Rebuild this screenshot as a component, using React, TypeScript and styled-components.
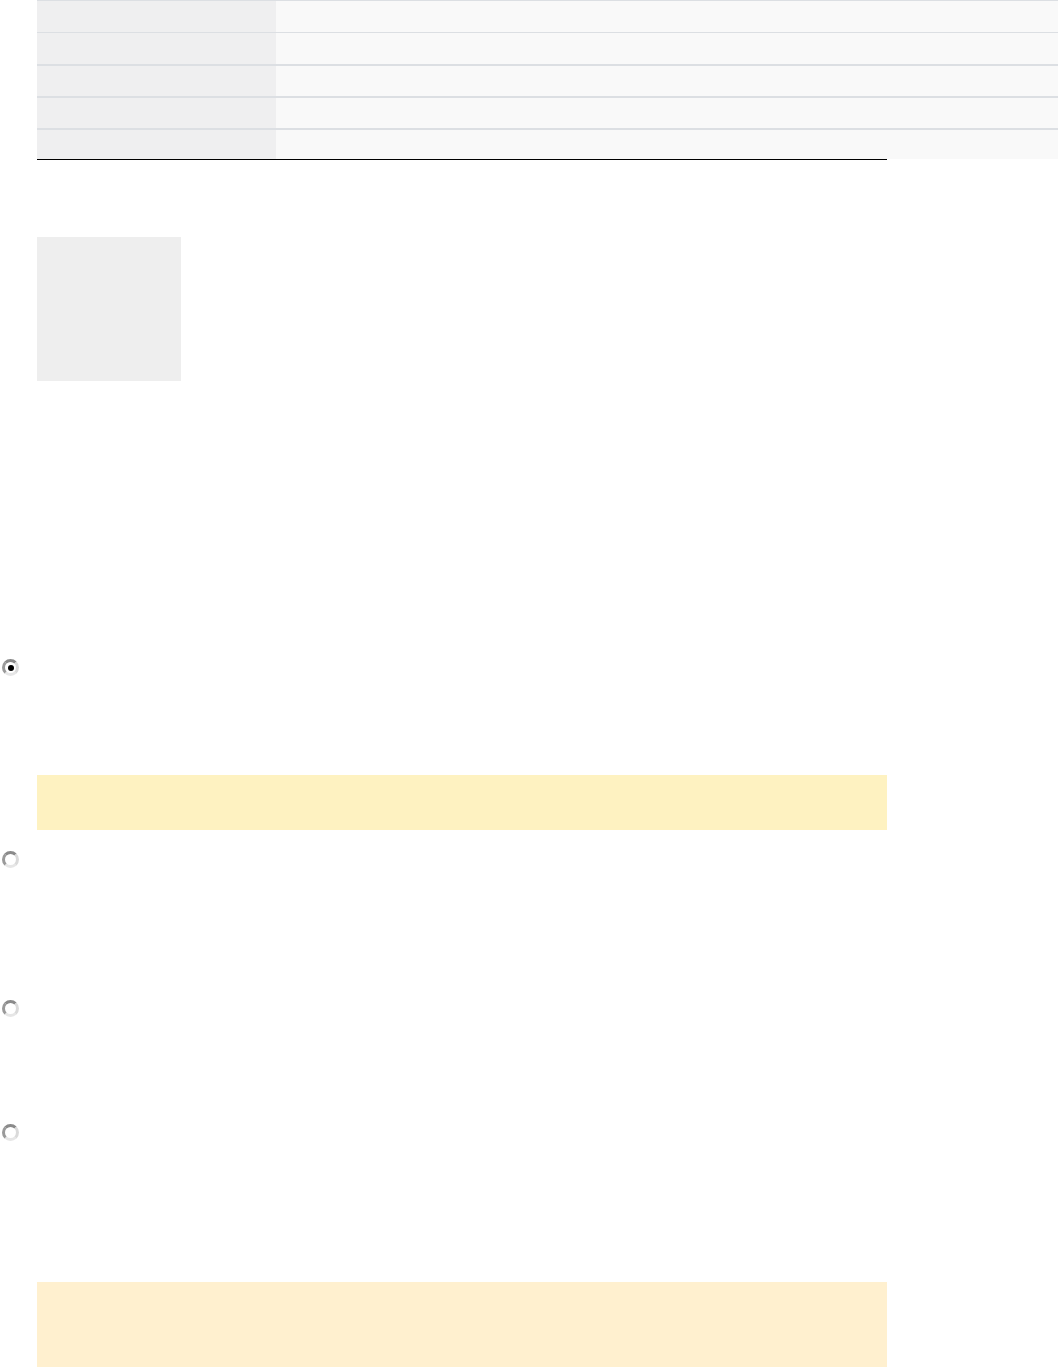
import styled, { createGlobalStyle } from "styled-components";

const GlobalStyle = createGlobalStyle`
    *, *::before, *::after {
        box-sizing: border-box;
    }
    html, body {
        margin: 0;
        padding: 0;
        background: #ffffff;
        overflow: hidden;
    }
    body {
        font-family: "Liberation Sans", Arial, sans-serif;
        font-size: 14px;
        color: #222;
    }
`;

const Page = styled.div`
    width: 1058px;
    height: 1367px;
    overflow: hidden;
`;

const Section = styled.div`
    width: 850px;
    margin-left: 37px;
    border-bottom: 1px solid #000000;
`;

const SpecTable = styled.div`
    width: 1021px;
    display: flex;
    flex-direction: column;
`;

const SpecRow = styled.div<{ $thick?: boolean; $h: number }>`
    display: grid;
    grid-template-columns: 239px 1fr;
    height: ${(p) => p.$h}px;
    border-top: ${(p) => (p.$thick ? 2 : 1)}px solid #dcdfe3;
`;

const KeyCell = styled.div`
    background: #efeff0;
`;

const ValueCell = styled.div`
    background: #f9f9f9;
`;

const Thumb = styled.div`
    width: 144px;
    height: 144px;
    margin: 77px 0 0 37px;
    background: #eeeeee;
`;

const Options = styled.div`
    display: flex;
    flex-direction: column;
`;

const Option = styled.div<{ $top: number }>`
    display: grid;
    grid-template-columns: 37px 850px;
    margin-top: ${(p) => p.$top}px;
`;

const Radio = styled.span<{ $checked?: boolean }>`
    display: block;
    width: 17px;
    height: 17px;
    margin-left: 2px;
    border-radius: 50%;
    border: 3px solid;
    border-color: #8a8a8a #dadada #e6e6e6 #9a9a9a;
    position: relative;
    &::after {
        content: "";
        display: ${(p) => (p.$checked ? "block" : "none")};
        position: absolute;
        left: 2.5px;
        top: 2.5px;
        width: 6px;
        height: 6px;
        border-radius: 50%;
        background: #000;
    }
`;

const OptionBody = styled.div<{ $h: number }>`
    min-height: ${(p) => p.$h}px;
`;

const Note = styled.div<{ $bg: string; $h: number; $top: number }>`
    width: 850px;
    height: ${(p) => p.$h}px;
    margin: ${(p) => p.$top}px 0 0 37px;
    background: ${(p) => p.$bg};
`;

const rows = [
    { h: 32, thick: false },
    { h: 32, thick: false },
    { h: 32, thick: true },
    { h: 32, thick: true },
    { h: 31, thick: true },
];

export default function App() {
    return (
        <Page>
            <GlobalStyle />
            <Section>
                <SpecTable>
                    {rows.map((r, i) => (
                        <SpecRow key={i} $h={r.h} $thick={r.thick}>
                            <KeyCell />
                            <ValueCell />
                        </SpecRow>
                    ))}
                </SpecTable>
            </Section>
            <Thumb />
            <Options>
                <Option $top={278}>
                    <Radio $checked />
                    <OptionBody $h={17} />
                </Option>
                <Note $bg="#fef2c1" $h={55} $top={99} />
                <Option $top={21}>
                    <Radio />
                    <OptionBody $h={17} />
                </Option>
                <Option $top={132}>
                    <Radio />
                    <OptionBody $h={17} />
                </Option>
                <Option $top={107}>
                    <Radio />
                    <OptionBody $h={17} />
                </Option>
                <Note $bg="#fff0cf" $h={100} $top={141} />
            </Options>
        </Page>
    );
}
